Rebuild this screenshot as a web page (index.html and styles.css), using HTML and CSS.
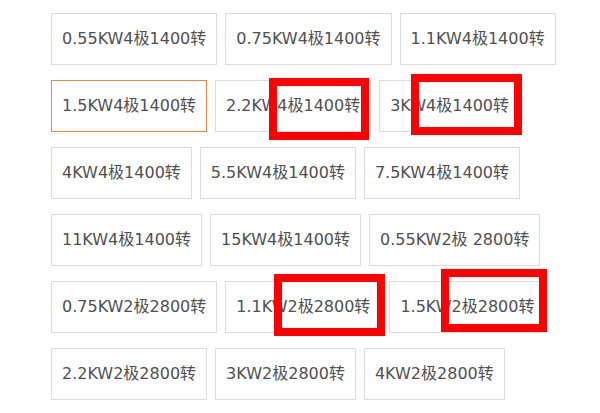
FILE: index.html
```html
<!DOCTYPE html>
<html lang="zh-CN">
<head>
<meta charset="utf-8">
<title>电机规格</title>
<link rel="stylesheet" href="styles.css">
</head>
<body>
<div class="page">
  <ul class="specs">
    <li class="spec">0.55KW4极1400转</li>
    <li class="spec">0.75KW4极1400转</li>
    <li class="spec">1.1KW4极1400转</li>
    <li class="spec selected">1.5KW4极1400转</li>
    <li class="spec">2.2KW4极1400转</li>
    <li class="spec">3KW4极1400转</li>
    <li class="spec">4KW4极1400转</li>
    <li class="spec">5.5KW4极1400转</li>
    <li class="spec">7.5KW4极1400转</li>
    <li class="spec">11KW4极1400转</li>
    <li class="spec">15KW4极1400转</li>
    <li class="spec">0.55KW2极 2800转</li>
    <li class="spec">0.75KW2极2800转</li>
    <li class="spec">1.1KW2极2800转</li>
    <li class="spec">1.5KW2极2800转</li>
    <li class="spec">2.2KW2极2800转</li>
    <li class="spec">3KW2极2800转</li>
    <li class="spec">4KW2极2800转</li>
  </ul>
  <div class="mark mark-1"></div>
  <div class="mark mark-2"></div>
  <div class="mark mark-3"></div>
  <div class="mark mark-4"></div>
</div>
</body>
</html>
```

FILE: styles.css
```css
html, body {
  margin: 0;
  padding: 0;
  background: #ffffff;
}

.page {
  position: relative;
  width: 600px;
  height: 413px;
  overflow: hidden;
}

.specs {
  list-style: none;
  margin: 0;
  padding: 13px 0 0 51px;
  width: 540px;
  display: flex;
  flex-wrap: wrap;
  column-gap: 8px;
  row-gap: 15px;
}

.spec {
  box-sizing: border-box;
  height: 52px;
  line-height: 50px;
  padding: 0 10px;
  border: 1px solid #dcdcdc;
  font-family: "DejaVu Sans", "Noto Sans CJK SC", sans-serif;
  font-size: 16px;
  color: #505050;
  white-space: pre;
}

.spec.selected {
  border-color: #e8874a;
}

.mark {
  position: absolute;
  box-sizing: border-box;
  border: 8px solid #ff0000;
}

.mark-1 { left: 269px; top: 78px; width: 100px; height: 62px; }
.mark-2 { left: 411px; top: 74px; width: 111px; height: 61px; }
.mark-3 { left: 274px; top: 274px; width: 111px; height: 62px; }
.mark-4 { left: 441px; top: 269px; width: 106px; height: 63px; }
```
